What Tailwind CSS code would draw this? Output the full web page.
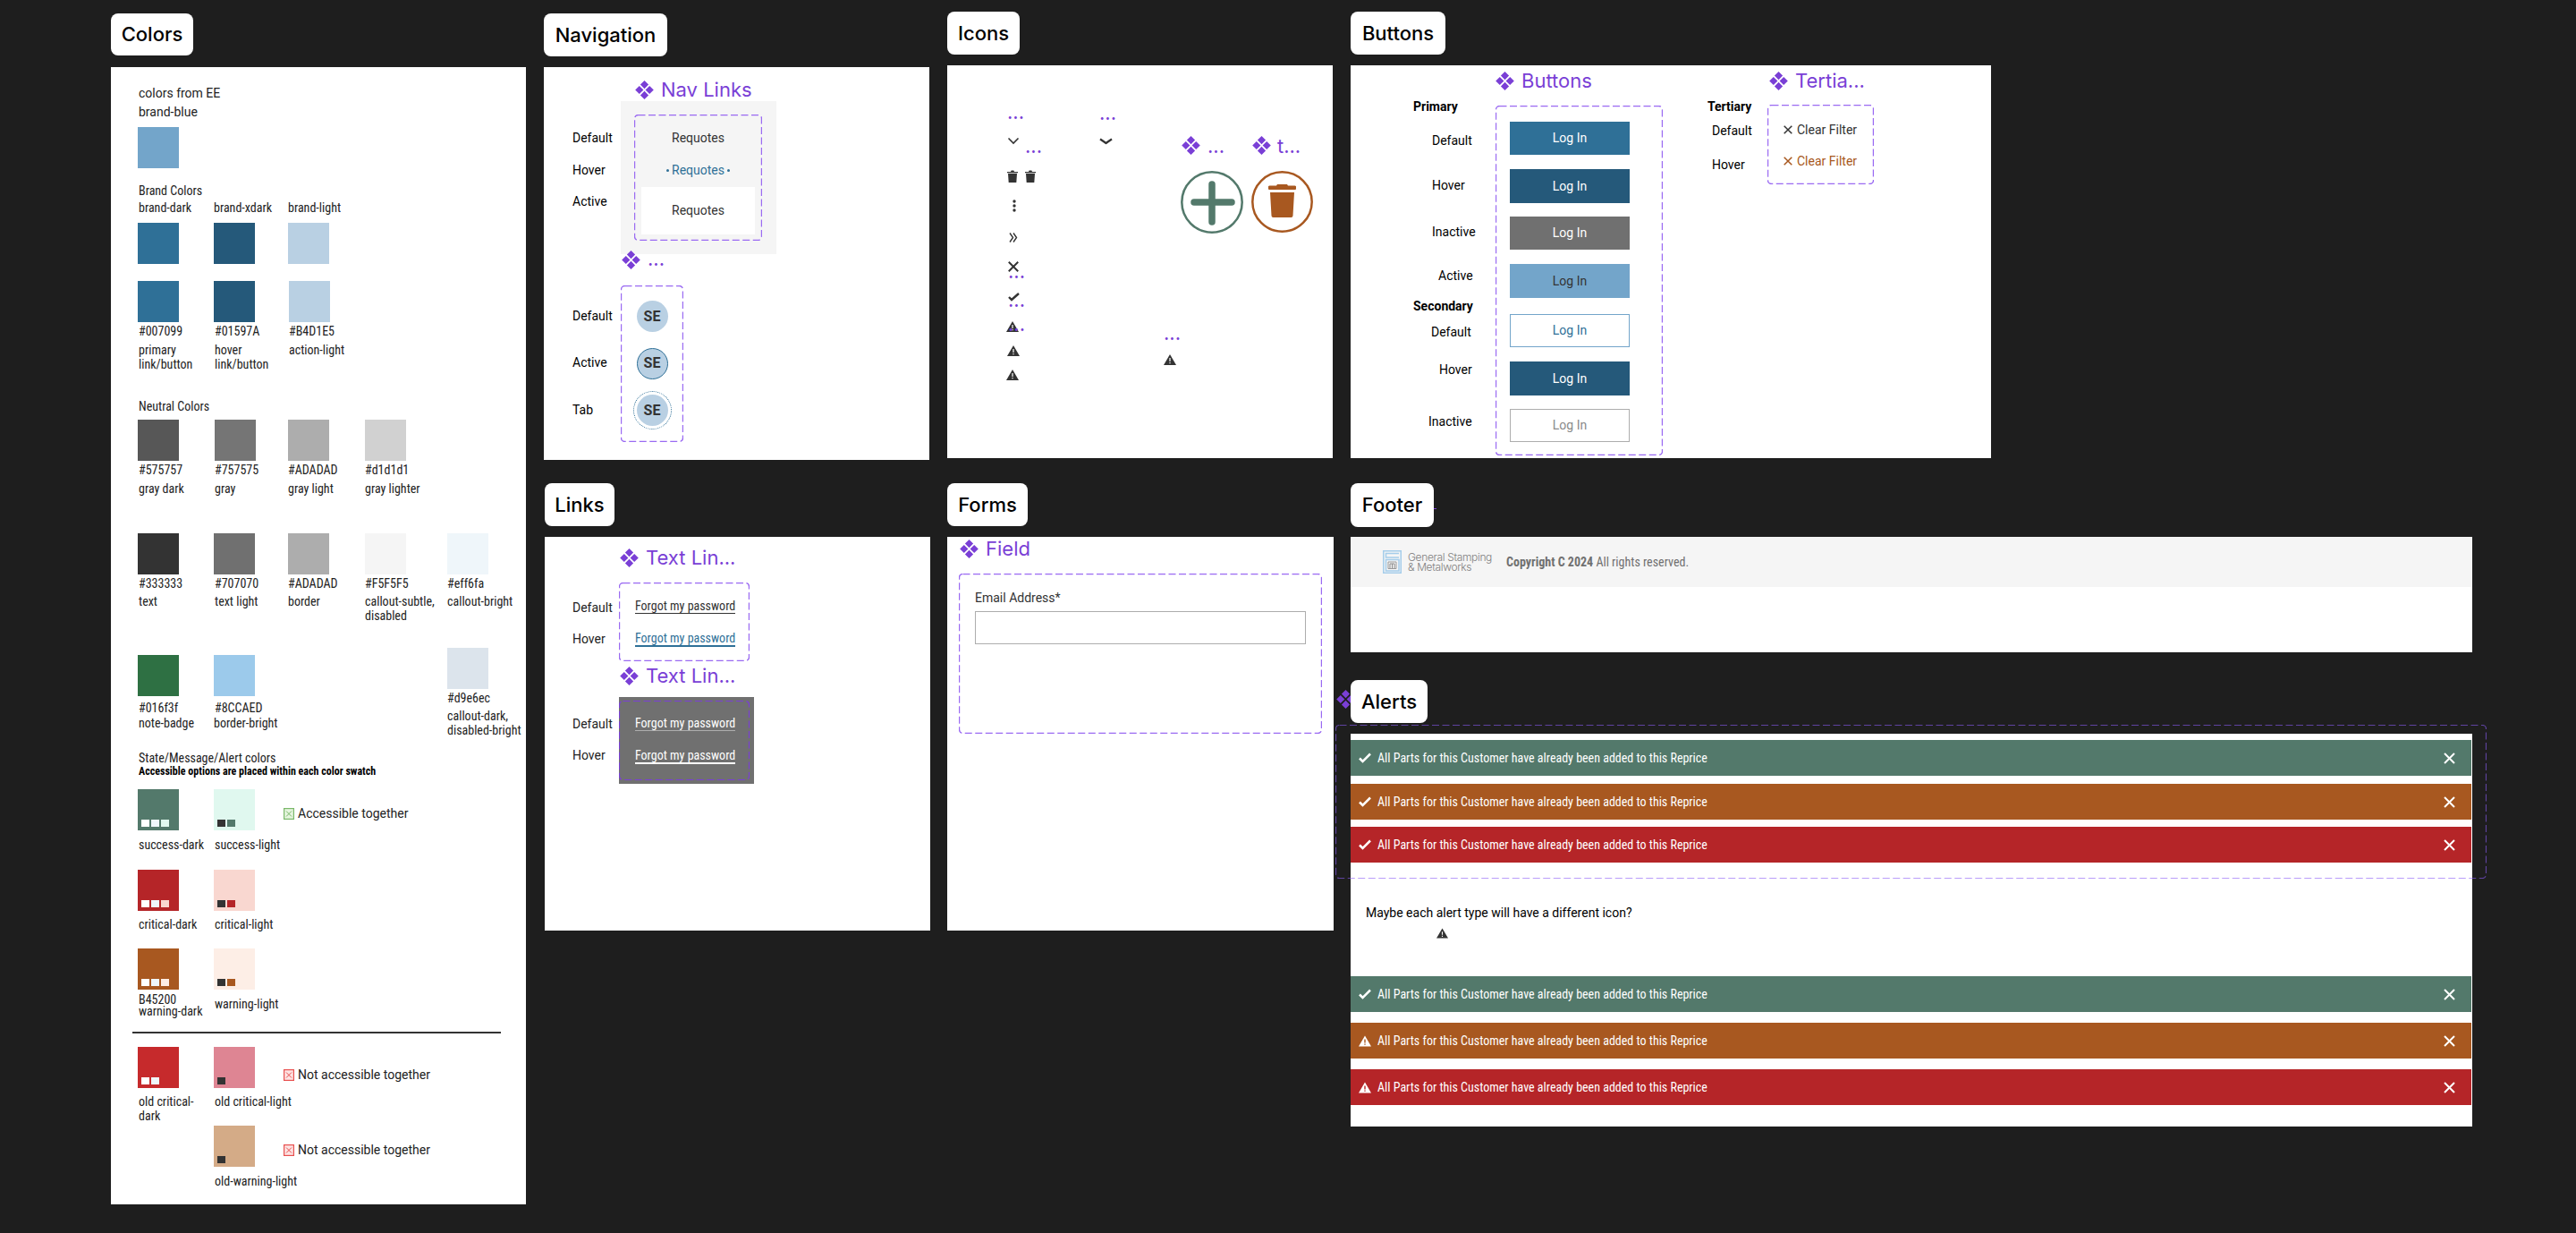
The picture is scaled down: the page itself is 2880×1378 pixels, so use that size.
<!doctype html>
<html><head><meta charset="utf-8"><script src="https://cdn.jsdelivr.net/npm/@tailwindcss/browser@4"></script></head>
<body class="bg-[#1e1e1e]">
<div class="relative w-[2880px] h-[1378px] overflow-hidden bg-[#1e1e1e] font-[family-name:Roboto] text-[14px] text-[#222]">

<!-- COLORS -->
<div class="absolute left-[124px] top-[15px] w-[92px] h-[47px] bg-white rounded-[8px] flex items-center justify-center font-[family-name:Inter] font-medium text-[22px] text-black">Colors</div>
<div class="absolute left-[124px] top-[75px] w-[464px] h-[1271px] bg-white flex flex-col [font-stretch:75%]">
  <div class="pl-[31px] pt-[19px] leading-[21px] [font-stretch:100%]"><div>colors from EE</div><div>brand-blue</div></div>
  <div class="ml-[30px] mt-[6px] w-[46px] h-[46px] bg-[#73a5ca]"></div>
  <div class="pl-[31px] mt-[17px] leading-4">Brand Colors</div>
  <div class="pl-[30px] mt-[3px] grid grid-cols-[85px_83px_86px_92px_88px] leading-4"><div class="pl-[1px]">brand-dark</div><div>brand-xdark</div><div>brand-light</div></div>
  <div class="pl-[30px] mt-[9px] grid grid-cols-[85px_83px_86px_92px_88px]"><div class="w-[46px] h-[46px] bg-[#2f7097]"></div><div class="w-[46px] h-[46px] bg-[#25597a]"></div><div class="w-[46px] h-[46px] bg-[#b9d0e3]"></div></div>
  <div class="pl-[30px] mt-[19px] grid grid-cols-[85px_83px_86px_92px_88px] leading-4">
    <div><div class="w-[46px] h-[46px] bg-[#2f7097]"></div><div class="pl-[1px] mt-[2px]">#007099</div><div class="pl-[1px] mt-[5px]">primary<br>link/button</div></div>
    <div><div class="w-[46px] h-[46px] bg-[#25597a]"></div><div class="pl-[1px] mt-[2px]">#01597A</div><div class="pl-[1px] mt-[5px]">hover<br>link/button</div></div>
    <div><div class="ml-[1px] w-[46px] h-[46px] bg-[#b9d0e3]"></div><div class="pl-[1px] mt-[2px]">#B4D1E5</div><div class="pl-[1px] mt-[5px]">action-light</div></div>
  </div>
  <div class="pl-[31px] mt-[31px] leading-4">Neutral Colors</div>
  <div class="pl-[30px] mt-[7px] grid grid-cols-[85px_83px_86px_92px_88px] leading-4">
    <div><div class="w-[46px] h-[46px] bg-[#575757]"></div><div class="pl-[1px] mt-[2px]">#575757</div><div class="pl-[1px] mt-[5px]">gray dark</div></div>
    <div><div class="ml-[1px] w-[46px] h-[46px] bg-[#757575]"></div><div class="pl-[1px] mt-[2px]">#757575</div><div class="pl-[1px] mt-[5px]">gray</div></div>
    <div><div class="w-[46px] h-[46px] bg-[#adadad]"></div><div class="mt-[2px]">#ADADAD</div><div class="mt-[5px]">gray light</div></div>
    <div><div class="w-[46px] h-[46px] bg-[#d1d1d1]"></div><div class="mt-[2px]">#d1d1d1</div><div class="mt-[5px]">gray lighter</div></div>
  </div>
  <div class="pl-[30px] mt-[42px] grid grid-cols-[85px_83px_86px_92px_88px] leading-4">
    <div><div class="w-[46px] h-[46px] bg-[#333333]"></div><div class="pl-[1px] mt-[2px]">#333333</div><div class="pl-[1px] mt-[4px]">text</div></div>
    <div><div class="w-[46px] h-[46px] bg-[#707070]"></div><div class="pl-[1px] mt-[2px]">#707070</div><div class="pl-[1px] mt-[4px]">text light</div></div>
    <div><div class="w-[46px] h-[46px] bg-[#adadad]"></div><div class="mt-[2px]">#ADADAD</div><div class="mt-[4px]">border</div></div>
    <div><div class="w-[46px] h-[46px] bg-[#f5f5f5]"></div><div class="mt-[2px]">#F5F5F5</div><div class="mt-[4px] whitespace-nowrap">callout-subtle,<br>disabled</div></div>
    <div><div class="w-[46px] h-[46px] bg-[#eff6fa]"></div><div class="mt-[2px]">#eff6fa</div><div class="mt-[4px] whitespace-nowrap">callout-bright</div></div>
  </div>
  <div class="pl-[30px] mt-[28px] grid grid-cols-[85px_83px_86px_92px_88px] leading-4 h-[101px]">
    <div class="pt-[8px]"><div class="w-[46px] h-[46px] bg-[#2e7043]"></div><div class="pl-[1px] mt-[5px]">#016f3f</div><div class="pl-[1px] mt-[1px]">note-badge</div></div>
    <div class="pt-[8px]"><div class="w-[46px] h-[46px] bg-[#9ccaeb]"></div><div class="pl-[1px] mt-[5px]">#8CCAED</div><div class="mt-[1px] whitespace-nowrap">border-bright</div></div>
    <div></div><div></div>
    <div><div class="w-[46px] h-[46px] bg-[#dce4ec]"></div><div class="mt-[2px]">#d9e6ec</div><div class="mt-[4px] whitespace-nowrap">callout-dark,<br>disabled-bright</div></div>
  </div>
  <div class="pl-[31px] mt-[14px] leading-4">State/Message/Alert colors</div>
  <div class="pl-[31px] leading-[15px] font-bold text-[12px] text-black">Accessible options are placed within each color swatch</div>
  <div class="pl-[30px] mt-[12px] grid grid-cols-[85px_83px_86px_92px_88px] leading-4">
    <div><div class="w-[46px] h-[46px] bg-[#53796b] flex items-end gap-[2px] pl-[4px] pb-[4px]"><i class="w-[9px] h-[8px] bg-white"></i><i class="w-[9px] h-[8px] bg-[#eff6fa]"></i><i class="w-[9px] h-[8px] bg-[#e0f8ef]"></i></div><div class="pl-[1px] mt-[8px] whitespace-nowrap">success-dark</div></div>
    <div><div class="w-[46px] h-[46px] bg-[#e0f8ef] flex items-end gap-[2px] pl-[4px] pb-[4px]"><i class="w-[9px] h-[8px] bg-[#333]"></i><i class="w-[9px] h-[8px] bg-[#53796b]"></i></div><div class="pl-[1px] mt-[8px] whitespace-nowrap">success-light</div></div>
    <div class="col-span-3 -ml-[5px] mt-[19px] flex items-center gap-[4px] [font-stretch:100%] h-4 whitespace-nowrap"><svg width="12" height="13" viewBox="0 0 12 13"><rect x=".6" y=".6" width="10.8" height="11.8" fill="#e6f5df" stroke="#7ab86a" stroke-width="1.2"/><path d="M3 3.5l6 6M9 3.5l-6 6" stroke="#7ab86a" stroke-width="1"/></svg>Accessible together</div>
  </div>
  <div class="pl-[30px] mt-[20px] grid grid-cols-[85px_83px_86px_92px_88px] leading-4">
    <div><div class="w-[46px] h-[46px] bg-[#b52528] flex items-end gap-[2px] pl-[4px] pb-[4px]"><i class="w-[9px] h-[8px] bg-white"></i><i class="w-[9px] h-[8px] bg-[#eff6fa]"></i><i class="w-[9px] h-[8px] bg-[#f9d7d0]"></i></div><div class="pl-[1px] mt-[7px]">critical-dark</div></div>
    <div><div class="w-[46px] h-[46px] bg-[#f9d7d0] flex items-end gap-[2px] pl-[4px] pb-[4px]"><i class="w-[9px] h-[8px] bg-[#333]"></i><i class="w-[9px] h-[8px] bg-[#b52528]"></i></div><div class="pl-[1px] mt-[7px]">critical-light</div></div>
  </div>
  <div class="pl-[30px] mt-[19px] grid grid-cols-[85px_83px_86px_92px_88px]">
    <div><div class="w-[46px] h-[46px] bg-[#a85820] flex items-end gap-[2px] pl-[4px] pb-[4px]"><i class="w-[9px] h-[8px] bg-white"></i><i class="w-[9px] h-[8px] bg-[#eff6fa]"></i><i class="w-[9px] h-[8px] bg-[#fdeee6]"></i></div><div class="pl-[1px] mt-[5px] leading-[13px] whitespace-nowrap">B45200<br>warning-dark</div></div>
    <div><div class="w-[46px] h-[46px] bg-[#fdeee6] flex items-end gap-[2px] pl-[4px] pb-[4px]"><i class="w-[9px] h-[8px] bg-[#333]"></i><i class="w-[9px] h-[8px] bg-[#a85820]"></i></div><div class="pl-[1px] mt-[8px] leading-4">warning-light</div></div>
  </div>
  <div class="ml-[24px] mt-[16px] w-[412px] h-[2px] bg-[#333]"></div>
  <div class="pl-[30px] mt-[15px] grid grid-cols-[85px_83px_86px_92px_88px] leading-4">
    <div><div class="w-[46px] h-[46px] bg-[#c62a2c] flex items-end gap-[2px] pl-[4px] pb-[4px]"><i class="w-[9px] h-[8px] bg-white"></i><i class="w-[9px] h-[8px] bg-[#eff6fa]"></i></div><div class="pl-[1px] mt-[7px]">old critical-<br>dark</div></div>
    <div><div class="w-[46px] h-[46px] bg-[#de8593] flex items-end pl-[4px] pb-[4px]"><i class="w-[9px] h-[8px] bg-[#333]"></i></div><div class="pl-[1px] mt-[7px] whitespace-nowrap">old critical-light</div></div>
    <div class="col-span-3 -ml-[5px] mt-[23px] flex items-center gap-[4px] [font-stretch:100%] h-4 whitespace-nowrap"><svg width="12" height="13" viewBox="0 0 12 13"><rect x=".6" y=".6" width="10.8" height="11.8" fill="#fde3e3" stroke="#e8504f" stroke-width="1.2"/><path d="M3 3.5l6 6M9 3.5l-6 6" stroke="#e8504f" stroke-width="1"/></svg>Not accessible together</div>
  </div>
  <div class="pl-[30px] mt-[3px] grid grid-cols-[85px_83px_86px_92px_88px] leading-4">
    <div></div>
    <div><div class="w-[46px] h-[46px] bg-[#d4ab87] flex items-end pl-[4px] pb-[4px]"><i class="w-[9px] h-[8px] bg-[#333]"></i></div><div class="pl-[1px] mt-[8px] whitespace-nowrap">old-warning-light</div></div>
    <div class="col-span-3 -ml-[5px] mt-[19px] flex items-center gap-[4px] [font-stretch:100%] h-4 whitespace-nowrap"><svg width="12" height="13" viewBox="0 0 12 13"><rect x=".6" y=".6" width="10.8" height="11.8" fill="#fde3e3" stroke="#e8504f" stroke-width="1.2"/><path d="M3 3.5l6 6M9 3.5l-6 6" stroke="#e8504f" stroke-width="1"/></svg>Not accessible together</div>
  </div>
</div>

<!-- NAVIGATION -->
<div class="absolute left-[608px] top-[15px] w-[138px] h-[48px] bg-white rounded-[8px] flex items-center justify-center font-[family-name:Inter] font-medium text-[22px] text-black">Navigation</div>
<div class="absolute left-[608px] top-[75px] w-[431px] h-[439px] bg-white text-black">
  <div class="absolute left-[102px] top-[10px] h-[30px] flex items-center gap-[8px] font-[family-name:Inter] text-[22px] text-[#7a3fd6]"><svg width="21" height="21" viewBox="0 0 21 21" fill="#7a3fd6"><path d="M10.5 0l4.6 4.6-4.6 4.6-4.6-4.6zM4.8 5.9l4.6 4.6-4.6 4.6L.2 10.5zM16.2 5.9l4.6 4.6-4.6 4.6-4.6-4.6zM10.5 11.8l4.6 4.6-4.6 4.6-4.6-4.6z"/></svg>Nav Links</div>
  <div class="absolute left-[32px] top-[62px] flex flex-col"><div class="h-[35.5px] leading-[35.5px]">Default</div><div class="h-[35.5px] leading-[35.5px]">Hover</div><div class="h-[35.5px] leading-[35.5px]">Active</div></div>
  <div class="absolute left-[86px] top-[38px] w-[174px] h-[171px] bg-[#f5f5f5] p-[15px]">
    <div class="relative w-[143px] h-[141px] flex flex-col items-center text-[#333]">
      <svg class="absolute inset-0" width="143" height="141"><rect x=".5" y=".5" width="142" height="140" rx="4" fill="none" stroke="#9a6af2" stroke-width="1.4" stroke-dasharray="8 3.5"/></svg>
      <div class="h-[35.5px] leading-[35.5px] mt-[9px]">Requotes</div>
      <div class="h-[35.5px] leading-[35.5px] text-[#2f7097] flex items-center gap-[3px]"><i class="w-[3px] h-[3px] rounded-full bg-[#2f7097]"></i>Requotes<i class="w-[3px] h-[3px] rounded-full bg-[#2f7097]"></i></div>
      <div class="mt-[1px] w-[127px] h-[53px] bg-white flex items-center justify-center">Requotes</div>
    </div>
  </div>
  <div class="absolute left-[87px] top-[205px] h-[21px] flex items-center gap-[8px] font-[family-name:Inter] text-[22px] text-[#7a3fd6]"><svg width="21" height="21" viewBox="0 0 21 21" fill="#7a3fd6"><path d="M10.5 0l4.6 4.6-4.6 4.6-4.6-4.6zM4.8 5.9l4.6 4.6-4.6 4.6L.2 10.5zM16.2 5.9l4.6 4.6-4.6 4.6-4.6-4.6zM10.5 11.8l4.6 4.6-4.6 4.6-4.6-4.6z"/></svg><span class="relative top-[-1px]">...</span></div>
  <div class="absolute left-[32px] top-[268px] leading-5">Default</div>
  <div class="absolute left-[32px] top-[320px] leading-5">Active</div>
  <div class="absolute left-[32px] top-[373px] leading-5">Tab</div>
  <div class="absolute left-[86px] top-[244px] w-[70px] h-[175px] flex flex-col items-center pt-[17px] gap-[17.5px] text-[#333] font-bold text-[16px]">
    <svg class="absolute inset-0" width="70" height="175"><rect x=".5" y=".5" width="69" height="174" rx="4" fill="none" stroke="#9a6af2" stroke-width="1.4" stroke-dasharray="8 3.5"/></svg>
    <div class="w-[35px] h-[35px] rounded-full bg-[#b9d0e3] flex items-center justify-center">SE</div>
    <div class="w-[35px] h-[35px] rounded-full bg-[#b9d0e3] border border-[#2f7097] flex items-center justify-center">SE</div>
    <div class="w-[35px] h-[35px] rounded-full bg-[#b9d0e3] outline-1 outline-dotted outline-offset-[3px] outline-[#2f7097] flex items-center justify-center">SE</div>
  </div>
</div>

<!-- LINKS -->
<div class="absolute left-[609px] top-[540px] w-[78px] h-[48px] bg-white rounded-[8px] flex items-center justify-center font-[family-name:Inter] font-medium text-[22px] text-black">Links</div>
<div class="absolute left-[609px] top-[600px] w-[431px] h-[440px] bg-white text-[#222]">
  <div class="absolute left-[84px] top-[8px] h-[30px] flex items-center gap-[8px] font-[family-name:Inter] text-[22px] text-[#7a3fd6]"><svg width="21" height="21" viewBox="0 0 21 21" fill="#7a3fd6"><path d="M10.5 0l4.6 4.6-4.6 4.6-4.6-4.6zM4.8 5.9l4.6 4.6-4.6 4.6L.2 10.5zM16.2 5.9l4.6 4.6-4.6 4.6-4.6-4.6zM10.5 11.8l4.6 4.6-4.6 4.6-4.6-4.6z"/></svg>Text Lin...</div>
  <div class="absolute left-[31px] top-[69px] leading-5">Default</div>
  <div class="absolute left-[31px] top-[104px] leading-5">Hover</div>
  <div class="absolute left-[83px] top-[51px] w-[146px] h-[88px] flex flex-col items-start pl-[18px] pt-[18px] gap-[19px] [font-stretch:75%] text-[#333] leading-4">
    <svg class="absolute inset-0" width="146" height="88"><rect x=".5" y=".5" width="145" height="87" rx="4" fill="none" stroke="#9a6af2" stroke-width="1.4" stroke-dasharray="8 3.5"/></svg>
    <div class="border-b border-[#333] h-[17px]">Forgot my password</div>
    <div class="border-b-2 border-[#2f7097] h-[18px] text-[#2f7097]">Forgot my password</div>
  </div>
  <div class="absolute left-[84px] top-[140px] h-[30px] flex items-center gap-[8px] font-[family-name:Inter] text-[22px] text-[#7a3fd6]"><svg width="21" height="21" viewBox="0 0 21 21" fill="#7a3fd6"><path d="M10.5 0l4.6 4.6-4.6 4.6-4.6-4.6zM4.8 5.9l4.6 4.6-4.6 4.6L.2 10.5zM16.2 5.9l4.6 4.6-4.6 4.6-4.6-4.6zM10.5 11.8l4.6 4.6-4.6 4.6-4.6-4.6z"/></svg>Text Lin...</div>
  <div class="absolute left-[31px] top-[199px] leading-5">Default</div>
  <div class="absolute left-[31px] top-[234px] leading-5">Hover</div>
  <div class="absolute left-[83px] top-[179px] w-[151px] h-[97px] bg-[#707070] flex flex-col items-start pl-[18px] pt-[21px] gap-[19px] [font-stretch:75%] text-white leading-4">
    <svg class="absolute left-0 top-[4px]" width="146" height="89"><rect x=".5" y=".5" width="145" height="88" rx="4" fill="none" stroke="#7a3fd6" stroke-width="1.2" stroke-dasharray="8 3.5"/></svg>
    <div class="border-b border-[#adadad] h-[17px]">Forgot my password</div>
    <div class="border-b-2 border-white h-[18px]">Forgot my password</div>
  </div>
</div>

<!-- FORMS -->
<div class="absolute left-[1059px] top-[540px] w-[90px] h-[48px] bg-white rounded-[8px] flex items-center justify-center font-[family-name:Inter] font-medium text-[22px] text-black">Forms</div>
<div class="absolute left-[1059px] top-[600px] w-[432px] h-[440px] bg-white">
  <div class="absolute left-[14px] top-[-2px] h-[30px] flex items-center gap-[8px] font-[family-name:Inter] text-[22px] text-[#7a3fd6]"><svg width="21" height="21" viewBox="0 0 21 21" fill="#7a3fd6"><path d="M10.5 0l4.6 4.6-4.6 4.6-4.6-4.6zM4.8 5.9l4.6 4.6-4.6 4.6L.2 10.5zM16.2 5.9l4.6 4.6-4.6 4.6-4.6-4.6zM10.5 11.8l4.6 4.6-4.6 4.6-4.6-4.6z"/></svg>Field</div>
  <div class="absolute left-[13px] top-[41px] w-[406px] h-[179px] pl-[18px] pr-[18px] pt-[17px] text-[#333]">
    <svg class="absolute inset-0" width="406" height="179"><rect x=".5" y=".5" width="405" height="178" rx="4" fill="none" stroke="#9a6af2" stroke-width="1.4" stroke-dasharray="8 3.5"/></svg>
    <div class="leading-5">Email Address*</div>
    <div class="mt-[5px] h-[37px] border border-[#adadad] bg-white"></div>
  </div>
</div>

<!-- ICONS -->
<div class="absolute left-[1059px] top-[13px] w-[81px] h-[48px] bg-white rounded-[8px] flex items-center justify-center font-[family-name:Inter] font-medium text-[22px] text-black">Icons</div>
<div class="absolute left-[1059px] top-[73px] w-[431px] h-[439px] bg-white font-[family-name:Inter] text-[22px] leading-[22px] text-[#7a3fd6]">
  <span class="absolute left-[67px] top-[41px]">...</span>
  <span class="absolute left-[170px] top-[42px]">...</span>
  <span class="absolute left-[87px] top-[79px]">...</span>
  <svg class="absolute left-[67px] top-[80px]" width="14" height="9" viewBox="0 0 14 9"><path d="M1.500 1.500L7 7l5.500-5.500" fill="none" stroke="#333" stroke-width="1.600"/></svg>
  <svg class="absolute left-[170px] top-[81px]" width="15" height="8" viewBox="0 0 15 8"><path d="M1 1.500Q4 3.500 7.500 6Q11 3.500 14 1.500" fill="none" stroke="#333" stroke-width="2.200"/></svg>
  <svg class="absolute left-[67px] top-[117px]" width="12" height="14" viewBox="0 0 12 14" fill="#333"><path d="M0 2h4l.6-1.500h2.800L8 2h4v1.300H0zM1 4h10l-.7 10H1.700z"/></svg>
  <svg class="absolute left-[87px] top-[117px]" width="12" height="14" viewBox="0 0 12 14" fill="#333"><path d="M0 2h4l.6-1.500h2.800L8 2h4v1.300H0zM1 4h10l-.7 10H1.700z"/></svg>
  <svg class="absolute left-[73px] top-[150px]" width="4" height="14" viewBox="0 0 4 14" fill="#333"><circle cx="2" cy="2" r="1.700"/><circle cx="2" cy="7" r="1.700"/><circle cx="2" cy="12" r="1.700"/></svg>
  <svg class="absolute left-[69px] top-[187px]" width="10" height="11" viewBox="0 0 10 11"><path d="M1 .5L4.500 5.500 1 10.500M5 .5L8.500 5.500 5 10.500" fill="none" stroke="#333" stroke-width="1.400"/></svg>
  <svg class="absolute left-[68px] top-[219px]" width="12" height="12" viewBox="0 0 11 11"><path d="M.7.700l9.600 9.600M10.300.700L.7 10.300" stroke="#333" stroke-width="1.800"/></svg>
  <span class="absolute left-[68px] top-[219px]">...</span>
  <svg class="absolute left-[68px] top-[254px]" width="13" height="10" viewBox="0 0 13 10"><path d="M1 5l3 3 8-7" fill="none" stroke="#333" stroke-width="2.400"/></svg>
  <span class="absolute left-[68px] top-[251px]">...</span>
  <svg class="absolute left-[66px] top-[286px]" width="14" height="12" viewBox="0 0 14 12"><path d="M7 0l7 12H0z" fill="#333"/><path d="M6.400 4h1.200v4H6.400zM6.400 9h1.200v1.300H6.400z" fill="#fff"/></svg>
  <span class="absolute left-[68px] top-[278px]">...</span>
  <svg class="absolute left-[67px] top-[313px]" width="14" height="12" viewBox="0 0 14 12"><path d="M7 0l7 12H0z" fill="#333"/><path d="M6.400 4h1.200v4H6.400zM6.400 9h1.200v1.300H6.400z" fill="#fff"/></svg>
  <svg class="absolute left-[66px] top-[340px]" width="14" height="12" viewBox="0 0 14 12"><path d="M7 0l7 12H0z" fill="#333"/><path d="M6.400 4h1.200v4H6.400zM6.400 9h1.200v1.300H6.400z" fill="#fff"/></svg>
  <span class="absolute left-[242px] top-[288px]">...</span>
  <svg class="absolute left-[242px] top-[323px]" width="14" height="12" viewBox="0 0 14 12"><path d="M7 0l7 12H0z" fill="#333"/><path d="M6.400 4h1.200v4H6.400zM6.400 9h1.200v1.300H6.400z" fill="#fff"/></svg>
  <svg class="absolute left-[262px] top-[79px]" width="21" height="21" viewBox="0 0 21 21" fill="#7a3fd6"><path d="M10.500 0l4.600 4.600-4.600 4.600-4.600-4.600zM4.800 5.900l4.600 4.600-4.600 4.600L.2 10.500zM16.200 5.900l4.600 4.600-4.600 4.600-4.600-4.600zM10.500 11.800l4.600 4.600-4.600 4.600-4.600-4.600z"/></svg>
  <span class="absolute left-[291px] top-[79px]">...</span>
  <svg class="absolute left-[341px] top-[79px]" width="21" height="21" viewBox="0 0 21 21" fill="#7a3fd6"><path d="M10.500 0l4.600 4.600-4.600 4.600-4.600-4.600zM4.800 5.900l4.600 4.600-4.600 4.600L.2 10.500zM16.200 5.900l4.600 4.600-4.600 4.600-4.600-4.600zM10.500 11.800l4.600 4.600-4.600 4.600-4.600-4.600z"/></svg>
  <span class="absolute left-[369px] top-[79px]">t...</span>
  <svg class="absolute left-[261px] top-[118px]" width="70" height="70" viewBox="0 0 70 70"><circle cx="35" cy="35" r="33.700" fill="none" stroke="#53796b" stroke-width="2.500"/><path d="M35 15v42M15 35h42" stroke="#53796b" stroke-width="7.500" stroke-linecap="round"/></svg>
  <svg class="absolute left-[340px] top-[118px]" width="69" height="69" viewBox="0 0 69 69"><circle cx="34.500" cy="34.500" r="33.200" fill="none" stroke="#a85820" stroke-width="2.500"/><path d="M19 18.500a1.500 1.500 0 0 1 1.500-2h7.500l1-1.500h11l1 1.500h7.500a1.500 1.500 0 0 1 1.500 2v1.500a1 1 0 0 1-1 1H20a1 1 0 0 1-1-1zM21 24h27l-1.500 26a2 2 0 0 1-2 2h-20a2 2 0 0 1-2-2z" fill="#a85820"/></svg>
</div>

<!-- BUTTONS -->
<div class="absolute left-[1510px] top-[13px] w-[106px] h-[48px] bg-white rounded-[8px] flex items-center justify-center font-[family-name:Inter] font-medium text-[22px] text-black">Buttons</div>
<div class="absolute left-[1510px] top-[73px] w-[716px] h-[439px] bg-white text-black">
  <div class="absolute left-[162px] top-[2px] h-[30px] flex items-center gap-[8px] font-[family-name:Inter] text-[22px] text-[#7a3fd6]"><svg width="21" height="21" viewBox="0 0 21 21" fill="#7a3fd6"><path d="M10.5 0l4.6 4.6-4.6 4.6-4.6-4.6zM4.8 5.900l4.600 4.600-4.600 4.600L.2 10.500zM16.200 5.900l4.600 4.600-4.600 4.600-4.600-4.600zM10.500 11.800l4.600 4.600-4.600 4.600-4.600-4.600z"/></svg>Buttons</div>
  <div class="absolute left-[468px] top-[2px] h-[30px] flex items-center gap-[8px] font-[family-name:Inter] text-[22px] text-[#7a3fd6]"><svg width="21" height="21" viewBox="0 0 21 21" fill="#7a3fd6"><path d="M10.5 0l4.6 4.6-4.6 4.6-4.6-4.6zM4.8 5.900l4.600 4.600-4.600 4.600L.2 10.500zM16.200 5.900l4.600 4.600-4.600 4.600-4.600-4.600zM10.500 11.800l4.600 4.600-4.600 4.600-4.600-4.600z"/></svg>Tertia...</div>
  <span class="absolute left-[70px] top-[36px] leading-5 font-bold">Primary</span>
  <span class="absolute left-[91px] top-[74px] leading-5">Default</span>
  <span class="absolute left-[91px] top-[124px] leading-5">Hover</span>
  <span class="absolute left-[91px] top-[176px] leading-5">Inactive</span>
  <span class="absolute left-[98px] top-[225px] leading-5">Active</span>
  <span class="absolute left-[70px] top-[259px] leading-5 font-bold">Secondary</span>
  <span class="absolute left-[90px] top-[288px] leading-5">Default</span>
  <span class="absolute left-[99px] top-[330px] leading-5">Hover</span>
  <span class="absolute left-[87px] top-[388px] leading-5">Inactive</span>
  <div class="absolute left-[162px] top-[45px] w-[187px] h-[391px] flex flex-col pl-[16px] pt-[18px] text-white">
    <svg class="absolute inset-0" width="187" height="391"><rect x=".5" y=".5" width="186" height="390" rx="4" fill="none" stroke="#9a6af2" stroke-width="1.4" stroke-dasharray="8 3.5"/></svg>
    <div class="w-[134px] h-[37px] bg-[#2f7097] flex items-center justify-center">Log In</div>
    <div class="mt-[16px] w-[134px] h-[38px] bg-[#25597a] flex items-center justify-center">Log In</div>
    <div class="mt-[15px] w-[134px] h-[37px] bg-[#707070] flex items-center justify-center">Log In</div>
    <div class="mt-[16px] w-[134px] h-[38px] bg-[#73a5ca] text-[#333] flex items-center justify-center">Log In</div>
    <div class="mt-[18px] w-[134px] h-[37px] bg-white border border-[#73a5ca] text-[#2f7097] flex items-center justify-center">Log In</div>
    <div class="mt-[16px] w-[134px] h-[38px] bg-[#25597a] flex items-center justify-center">Log In</div>
    <div class="mt-[15px] w-[134px] h-[37px] bg-white border border-[#adadad] text-[#8a8a8a] flex items-center justify-center">Log In</div>
  </div>
  <span class="absolute left-[399px] top-[36px] leading-5 font-bold">Tertiary</span>
  <span class="absolute left-[404px] top-[63px] leading-5">Default</span>
  <span class="absolute left-[404px] top-[101px] leading-5">Hover</span>
  <div class="absolute left-[466px] top-[44px] w-[119px] h-[89px] flex flex-col pl-[18px] pt-[18px] gap-[15px] text-[#333]">
    <svg class="absolute inset-0" width="119" height="89"><rect x=".5" y=".5" width="118" height="88" rx="4" fill="none" stroke="#9a6af2" stroke-width="1.4" stroke-dasharray="8 3.5"/></svg>
    <div class="h-5 flex items-center gap-[5px]"><svg width="10" height="10" viewBox="0 0 10 10"><path d="M.7.700l8.600 8.600M9.300.700L.7 9.300" stroke="#333" stroke-width="1.500"/></svg>Clear Filter</div>
    <div class="h-5 flex items-center gap-[5px] text-[#a85820]"><svg width="10" height="10" viewBox="0 0 10 10"><path d="M.7.700l8.600 8.600M9.300.700L.7 9.300" stroke="#a85820" stroke-width="1.500"/></svg>Clear Filter</div>
  </div>
</div>

<!-- FOOTER -->
<div class="absolute left-[1510px] top-[540px] w-[93px] h-[49px] bg-white rounded-[8px] flex items-center justify-center font-[family-name:Inter] font-medium text-[22px] text-black">Footer</div>
<div class="absolute left-[1603px] top-[568px] w-[3px] h-[1px] bg-[#7a3fd6]"></div>
<div class="absolute left-[1510px] top-[600px] w-[1254px] h-[129px] bg-white">
  <div class="h-[56px] bg-[#f5f5f5] flex items-center pl-[36px] text-[#707070] [font-stretch:75%]">
    <svg width="21" height="26" viewBox="0 0 21 26" fill="none" stroke="#a5cdea" stroke-width="1.5"><rect x=".75" y=".75" width="19.500" height="24.500"/><path d="M18 3.500H3.500v4.500H18M3.500 10.500H18v12.500H3.500z"/><path d="M6 13h9v7.500H6z" stroke="#999" stroke-width="1"/><path d="M8 20v-5h5v5M10.500 15v5" stroke="#888" stroke-width="1"/></svg>
    <div class="ml-[7px] w-[110px] font-[family-name:Inter] font-light text-[12px] tracking-[-0.35px] leading-[11px] text-[#808080]">General Stamping<br>&amp; Metalworks</div>
    <div><span class="font-bold">Copyright C 2024</span> All rights reserved.</div>
  </div>
</div>

<!-- ALERTS -->
<svg class="absolute left-[1494px] top-[771px]" width="21" height="21" viewBox="0 0 21 21" fill="#7a3fd6"><path d="M10.500 0l4.600 4.600-4.600 4.600-4.600-4.600zM4.800 5.900l4.600 4.600-4.600 4.600L.2 10.500zM16.200 5.900l4.600 4.600-4.600 4.600-4.600-4.600zM10.500 11.800l4.600 4.600-4.600 4.600-4.600-4.600z"/></svg>
<div class="absolute left-[1510px] top-[760px] w-[86px] h-[48px] bg-white rounded-[8px] flex items-center justify-center font-[family-name:Inter] font-medium text-[22px] text-black">Alerts</div>
<div class="absolute left-[1510px] top-[820px] w-[1254px] h-[439px] bg-white flex flex-col text-white">
  <div class="mt-[7px] mr-[1px] h-[40px] bg-[#53796b] flex items-center pl-[9px] pr-[18px]"><svg width="14" height="12" viewBox="0 0 14 12"><path d="M1 6.500l3.500 3.500L13 1.500" fill="none" stroke="#fff" stroke-width="2.500"/></svg><span class="ml-[7px] flex-1 [font-stretch:75%]">All Parts for this Customer have already been added to this Reprice</span><svg width="13" height="13" viewBox="0 0 13 13"><path d="M1 1l11 11M12 1L1 12" stroke="#fff" stroke-width="2"/></svg></div>
  <div class="mt-[9px] mr-[1px] h-[40px] bg-[#a85820] flex items-center pl-[9px] pr-[18px]"><svg width="14" height="12" viewBox="0 0 14 12"><path d="M1 6.500l3.500 3.500L13 1.500" fill="none" stroke="#fff" stroke-width="2.500"/></svg><span class="ml-[7px] flex-1 [font-stretch:75%]">All Parts for this Customer have already been added to this Reprice</span><svg width="13" height="13" viewBox="0 0 13 13"><path d="M1 1l11 11M12 1L1 12" stroke="#fff" stroke-width="2"/></svg></div>
  <div class="mt-[8px] mr-[1px] h-[40px] bg-[#b52528] flex items-center pl-[9px] pr-[18px]"><svg width="14" height="12" viewBox="0 0 14 12"><path d="M1 6.500l3.500 3.500L13 1.500" fill="none" stroke="#fff" stroke-width="2.500"/></svg><span class="ml-[7px] flex-1 [font-stretch:75%]">All Parts for this Customer have already been added to this Reprice</span><svg width="13" height="13" viewBox="0 0 13 13"><path d="M1 1l11 11M12 1L1 12" stroke="#fff" stroke-width="2"/></svg></div>
  <div class="ml-[17px] mt-[46px] h-5 leading-5 text-black text-[14px]">Maybe each alert type will have a different icon?</div>
  <svg class="ml-[96px] mt-[7px]" width="13" height="12" viewBox="0 0 14 12"><path d="M7 0l7 12H0z" fill="#333"/><path d="M6.400 4h1.200v4H6.400zM6.400 9h1.200v1.300H6.400z" fill="#fff"/></svg>
  <div class="mt-[42px] mr-[1px] h-[40px] bg-[#53796b] flex items-center pl-[9px] pr-[18px]"><svg width="14" height="12" viewBox="0 0 14 12"><path d="M1 6.500l3.500 3.500L13 1.500" fill="none" stroke="#fff" stroke-width="2.500"/></svg><span class="ml-[7px] flex-1 [font-stretch:75%]">All Parts for this Customer have already been added to this Reprice</span><svg width="13" height="13" viewBox="0 0 13 13"><path d="M1 1l11 11M12 1L1 12" stroke="#fff" stroke-width="2"/></svg></div>
  <div class="mt-[12px] mr-[1px] h-[40px] bg-[#a85820] flex items-center pl-[9px] pr-[18px]"><svg width="14" height="13" viewBox="0 0 14 12"><path d="M7 0l7 12H0z" fill="#fff"/><path d="M6.300 4h1.400v4H6.300zM6.300 9h1.400v1.300H6.300z" fill="#a85820"/></svg><span class="ml-[7px] flex-1 [font-stretch:75%]">All Parts for this Customer have already been added to this Reprice</span><svg width="13" height="13" viewBox="0 0 13 13"><path d="M1 1l11 11M12 1L1 12" stroke="#fff" stroke-width="2"/></svg></div>
  <div class="mt-[12px] mr-[1px] h-[40px] bg-[#b52528] flex items-center pl-[9px] pr-[18px]"><svg width="14" height="13" viewBox="0 0 14 12"><path d="M7 0l7 12H0z" fill="#fff"/><path d="M6.300 4h1.400v4H6.300zM6.300 9h1.400v1.300H6.300z" fill="#b52528"/></svg><span class="ml-[7px] flex-1 [font-stretch:75%]">All Parts for this Customer have already been added to this Reprice</span><svg width="13" height="13" viewBox="0 0 13 13"><path d="M1 1l11 11M12 1L1 12" stroke="#fff" stroke-width="2"/></svg></div>
</div>
<svg class="absolute left-[1493px] top-[810px]" width="1287" height="172"><rect x=".5" y=".5" width="1286" height="171" rx="4" fill="none" stroke="#8b5cf6" stroke-opacity=".6" stroke-width="1.2" stroke-dasharray="8 3.5"/></svg>
</div>
</body></html>
